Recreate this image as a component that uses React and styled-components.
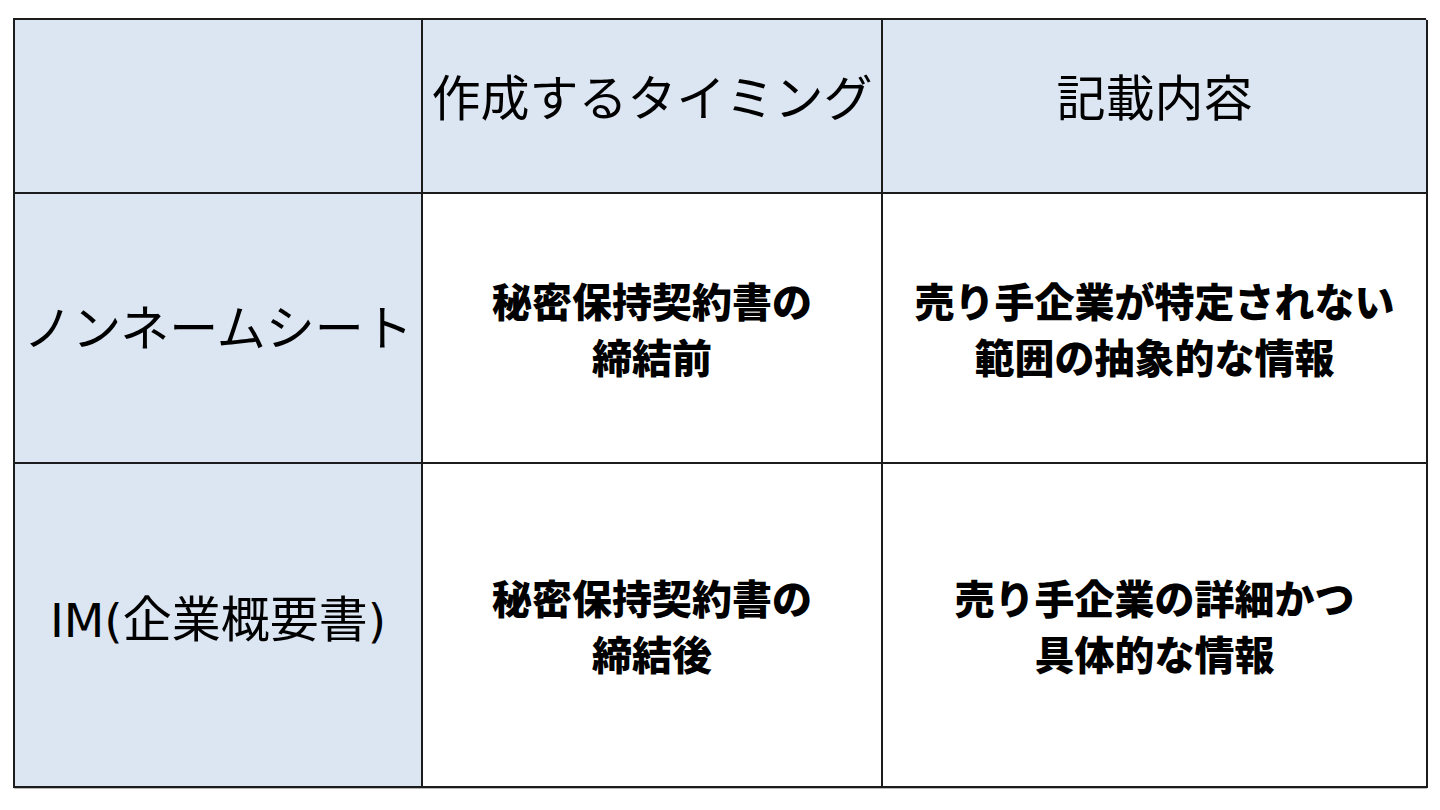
import React from "react";
import styled, { createGlobalStyle } from "styled-components";

const Global = createGlobalStyle`
  * { box-sizing: border-box; }
  html, body { margin: 0; padding: 0; background: #ffffff; }
  body { font-family: "Noto Sans CJK JP", "Noto Sans", sans-serif; color: #000; }
`;

const Page = styled.div`
  width: 1440px;
  height: 810px;
  padding: 18px 0 0 13px;
  background: #ffffff;
`;

const Table = styled.div`
  display: grid;
  grid-template-columns: 408px 460px 545px;
  grid-template-rows: 174px 270px 324px;
  width: 1413px;
  border-top: 2px solid #1c1c1c;
  border-left: 2px solid #1c1c1c;
  box-shadow: 1px 1px 0 #b8b8b8;
`;

const Cell = styled.div`
  display: flex;
  align-items: center;
  justify-content: center;
  text-align: center;
  border-right: 2px solid #1c1c1c;
  border-bottom: 2px solid #1c1c1c;
  background: ${(p) => (p.$head ? "#dce6f2" : "#ffffff")};
  font-size: ${(p) => (p.$bold ? "40px" : "49px")};
  font-weight: ${(p) => (p.$bold ? 900 : 400)};
  line-height: ${(p) => (p.$bold ? "56px" : "1.2")};
  padding-bottom: ${(p) => (p.$bold ? "0" : p.$top ? "22px" : p.$low ? "14px" : "6px")};
  white-space: nowrap;
`;

const Latin = styled.span`
  font-family: "DejaVu Sans", "Noto Sans CJK JP", sans-serif;
  font-size: 47px;
`;

export default function App() {
  return (
    <>
      <Global />
      <Page>
        <Table>
          <Cell $head $top />
          <Cell $head $top>作成するタイミング</Cell>
          <Cell $head $top>記載内容</Cell>

          <Cell $head>ノンネームシート</Cell>
          <Cell $bold>
            秘密保持契約書の
            <br />
            締結前
          </Cell>
          <Cell $bold>
            売り手企業が特定されない
            <br />
            範囲の抽象的な情報
          </Cell>

          <Cell $head $low>
            <span>
              <Latin>IM(</Latin>企業概要書<Latin>)</Latin>
            </span>
          </Cell>
          <Cell $bold>
            秘密保持契約書の
            <br />
            締結後
          </Cell>
          <Cell $bold>
            売り手企業の詳細かつ
            <br />
            具体的な情報
          </Cell>
        </Table>
      </Page>
    </>
  );
}
